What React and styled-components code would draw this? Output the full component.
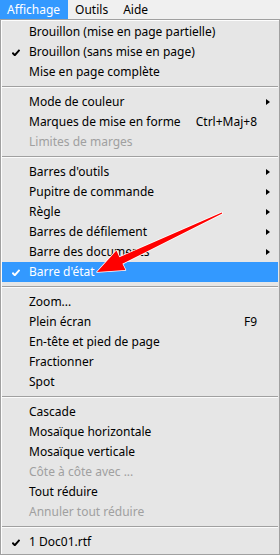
import React from "react"
import styled, { createGlobalStyle } from "styled-components"

const GlobalStyle = createGlobalStyle`
  html, body {
    margin: 0;
    padding: 0;
    background: #f0f0f0;
  }
  body {
    font-family: "Noto Sans", "Liberation Sans", sans-serif;
    font-size: 12px;
    color: #000;
  }
`

const Screen = styled.div`
  position: relative;
  width: 280px;
  height: 555px;
  overflow: hidden;
`

const MenuBar = styled.div`
  display: flex;
  height: 19px;
  background: #f0f0f0;
`

const BarItem = styled.div`
  display: flex;
  align-items: center;
  padding: 0 8px 0 7px;
  color: ${p => (p.$active ? "#fff" : "#000")};
  background: ${p => (p.$active ? "#3399ff" : "transparent")};
`

const Panel = styled.div`
  width: 276px;
  border: 1px solid #a0a0a0;
  background: #e6e6e6;
  padding: 2px 1px;
  box-shadow: inset 1px 1px 0 #fdfdfd;
`

const Row = styled.div`
  display: grid;
  grid-template-columns: 27px 1fr auto 21px;
  align-items: center;
  height: 20px;
  background: ${p => (p.$hover ? "#3399ff" : "transparent")};
  color: ${p => (p.$hover ? "#fff" : p.$disabled ? "#a0a0a0" : "#000")};
  white-space: nowrap;
`

const Check = styled.span`
  display: flex;
  justify-content: center;
  padding-left: 1px;
  svg {
    display: block;
  }
`

const Label = styled.span`
  line-height: 20px;
`

const Shortcut = styled.span`
  line-height: 20px;
`

const Arrow = styled.span`
  justify-self: center;
  margin-left: 1px;
  width: 0;
  height: 0;
  border-top: 3.5px solid transparent;
  border-bottom: 3.5px solid transparent;
  border-left: 4px solid #000;
`

const Separator = styled.div`
  height: 10px;
  display: flex;
  flex-direction: column;
  justify-content: center;
  &::before {
    content: "";
    height: 1px;
    background: #a0a0a0;
  }
  &::after {
    content: "";
    height: 1px;
    background: #fbfbfb;
  }
`

const Pointer = styled.svg`
  position: absolute;
  left: 0;
  top: 0;
  pointer-events: none;
`

const groups = [
  [
    { label: "Brouillon (mise en page partielle)" },
    { label: "Brouillon (sans mise en page)", checked: true },
    { label: "Mise en page complète" },
  ],
  [
    { label: "Mode de couleur", sub: true },
    { label: "Marques de mise en forme", shortcut: "Ctrl+Maj+8" },
    { label: "Limites de marges", disabled: true },
  ],
  [
    { label: "Barres d'outils", sub: true },
    { label: "Pupitre de commande", sub: true },
    { label: "Règle", sub: true },
    { label: "Barres de défilement", sub: true },
    { label: "Barre des documents", sub: true },
    { label: "Barre d'état", checked: true, hover: true },
  ],
  [
    { label: "Zoom..." },
    { label: "Plein écran", shortcut: "F9" },
    { label: "En-tête et pied de page" },
    { label: "Fractionner" },
    { label: "Spot" },
  ],
  [
    { label: "Cascade" },
    { label: "Mosaïque horizontale" },
    { label: "Mosaïque verticale" },
    { label: "Côte à côte avec ...", disabled: true },
    { label: "Tout réduire" },
    { label: "Annuler tout réduire", disabled: true },
  ],
  [{ label: "1 Doc01.rtf", checked: true }],
]

const CheckMark = ({ color }) => (
  <svg width="8" height="7" viewBox="0 0 8 7">
    <path d="M0.3 3.6 L2.8 6.2 L7.6 0.8" fill="none" stroke={color} strokeWidth="2" />
  </svg>
)

const MenuRow = ({ item }) => (
  <Row $hover={item.hover} $disabled={item.disabled}>
    <Check>{item.checked && <CheckMark color={item.hover ? "#fff" : "#000"} />}</Check>
    <Label>{item.label}</Label>
    <Shortcut>{item.shortcut}</Shortcut>
    {item.sub ? <Arrow /> : <span />}
  </Row>
)

export default function App() {
  return (
    <Screen>
      <GlobalStyle />
      <MenuBar>
        <BarItem $active>Affichage</BarItem>
        <BarItem>Outils</BarItem>
        <BarItem>Aide</BarItem>
      </MenuBar>
      <Panel>
        {groups.map((group, i) => (
          <React.Fragment key={i}>
            {i > 0 && <Separator />}
            {group.map(item => (
              <MenuRow key={item.label} item={item} />
            ))}
          </React.Fragment>
        ))}
      </Panel>
      <Pointer width="280" height="555" viewBox="0 0 280 555">
        <polygon
          points="97,272 125.5,270 122.4,263.8 222.2,213.6 221.8,212.4 119.4,257.2 116.4,250.6"
          fill="#ff0000"
          stroke="#fff"
          strokeWidth="1.5"
          strokeLinejoin="round"
          paintOrder="stroke"
        />
      </Pointer>
    </Screen>
  )
}
